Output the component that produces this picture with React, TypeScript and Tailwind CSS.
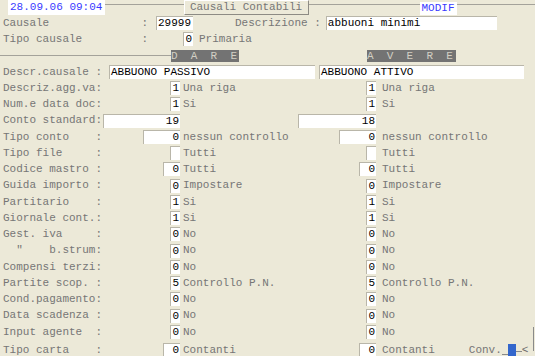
import React from 'react'

type Side = { w: string; v: string; d: string }
type Row = { label: string; l: Side; r: Side }

const narrow = 'w-[10px]'
const small = 'w-[17px]'

const rows: Row[] = [
  { label: 'Descriz.agg.va:', l: { w: narrow, v: '1', d: 'Una riga' }, r: { w: narrow, v: '1', d: 'Una riga' } },
  { label: 'Num.e data doc:', l: { w: narrow, v: '1', d: 'Si' }, r: { w: narrow, v: '1', d: 'Si' } },
  { label: 'Conto standard:', l: { w: 'w-[77px]', v: '19', d: '' }, r: { w: 'w-[78px]', v: '18', d: '' } },
  { label: 'Tipo conto    :', l: { w: 'w-[37px]', v: '0', d: 'nessun controllo' }, r: { w: 'w-[37px]', v: '0', d: 'nessun controllo' } },
  { label: 'Tipo file     :', l: { w: narrow, v: '', d: 'Tutti' }, r: { w: narrow, v: '', d: 'Tutti' } },
  { label: 'Codice mastro :', l: { w: small, v: '0', d: 'Tutti' }, r: { w: small, v: '0', d: 'Tutti' } },
  { label: 'Guida importo :', l: { w: narrow, v: '0', d: 'Impostare' }, r: { w: narrow, v: '0', d: 'Impostare' } },
  { label: 'Partitario    :', l: { w: narrow, v: '1', d: 'Si' }, r: { w: narrow, v: '1', d: 'Si' } },
  { label: 'Giornale cont.:', l: { w: narrow, v: '1', d: 'Si' }, r: { w: narrow, v: '1', d: 'Si' } },
  { label: 'Gest. iva     :', l: { w: narrow, v: '0', d: 'No' }, r: { w: narrow, v: '0', d: 'No' } },
  { label: '  "    b.strum:', l: { w: narrow, v: '0', d: 'No' }, r: { w: narrow, v: '0', d: 'No' } },
  { label: 'Compensi terzi:', l: { w: narrow, v: '0', d: 'No' }, r: { w: narrow, v: '0', d: 'No' } },
  { label: 'Partite scop. :', l: { w: narrow, v: '5', d: 'Controllo P.N.' }, r: { w: narrow, v: '5', d: 'Controllo P.N.' } },
  { label: 'Cond.pagamento:', l: { w: narrow, v: '0', d: 'No' }, r: { w: narrow, v: '0', d: 'No' } },
  { label: 'Data scadenza :', l: { w: narrow, v: '0', d: 'No' }, r: { w: narrow, v: '0', d: 'No' } },
  { label: 'Input agente  :', l: { w: narrow, v: '0', d: 'No' }, r: { w: narrow, v: '0', d: 'No' } },
]

function Box({ w, v, left }: { w: string; v: string; left?: boolean }) {
  return (
    <div
      className={`${w} h-[14px] shrink-0 bg-white border-l border-t border-[#b9b6a9] leading-[13px] text-black whitespace-pre ${
        left ? 'text-left pl-[1px]' : 'text-right pr-[1px]'
      }`}
    >
      {v}
    </div>
  )
}

function FieldRow({ row }: { row: Row }) {
  return (
    <div className="flex h-[16.25px] items-center">
      <div className="flex w-[180px] items-center justify-between pl-[3px]">
        <span className="whitespace-pre">{row.label}</span>
        <Box w={row.l.w} v={row.l.v} />
      </div>
      <div className="flex w-[196px] items-center justify-between">
        <span className="ml-[3px] whitespace-pre">{row.l.d}</span>
        <Box w={row.r.w} v={row.r.v} />
      </div>
      <span className="pl-[6px] whitespace-pre">{row.r.d}</span>
    </div>
  )
}

export default function App() {
  return (
    <div className="h-[356px] w-[535px] overflow-hidden bg-[#ece9d8] font-['Liberation_Mono',monospace] text-[11px] text-[#767676]">
      {/* header */}
      <div className="flex h-[15px] items-start">
        <div className="ml-[8px] h-[15px] w-[97px] bg-white pl-[2px] leading-[15px] text-[#3a3aff]">
          28.09.06 09:04
        </div>
        <div className="mt-[4px] flex-1 border-t border-[#a4a29a]" />
        <div className="h-[15px] w-[125px] border border-t-white border-l-white border-r-[#8d8b84] border-b-[#8d8b84] bg-[#ece9d8] text-center leading-[13px]">
          Causali Contabili
        </div>
        <div className="mt-[4px] w-[111px] border-t border-[#a4a29a]" />
        <div className="mt-[2px] h-[13px] w-[37px] bg-white pl-[2px] leading-[13px] text-[#3a3aff]">MODIF</div>
        <div className="mt-[4px] flex-1 border-t border-[#a4a29a]" />
      </div>

      {/* causale */}
      <div className="flex h-[16.25px] items-center pl-[3px]">
        <span className="w-[153px] whitespace-pre">{'Causale              :'}</span>
        <Box w="w-[37px]" v="29999" left />
        <span className="ml-[42px] whitespace-pre">Descrizione :</span>
        <div className="ml-[5px]">
          <Box w="w-[171px]" v="abbuoni minimi" left />
        </div>
      </div>
      <div className="flex h-[16.25px] items-center pl-[3px]">
        <span className="w-[180px] whitespace-pre">{'Tipo causale         :'}</span>
        <Box w={narrow} v="0" />
        <span className="ml-[6px]">Primaria</span>
      </div>

      {/* dare / avere */}
      <div className="flex h-[16.25px] items-center">
        <div className="w-[171px] border-t border-[#a4a29a]" />
        <div className="h-[12px] w-[68px] bg-[#737373] leading-[12px] whitespace-pre text-[#d2cfc4]">
          {'D  A  R  E'}
        </div>
        <div className="w-[128px]" />
        <div className="h-[12px] w-[89px] bg-[#737373] leading-[12px] whitespace-pre text-[#d2cfc4]">
          {'A  V  E  R  E'}
        </div>
      </div>

      {/* descr causale */}
      <div className="flex h-[16.25px] items-center pl-[3px]">
        <span className="w-[106px] whitespace-pre">Descr.causale :</span>
        <Box w="w-[206px]" v="ABBUONO PASSIVO" left />
        <div className="ml-[4px]">
          <Box w="w-[205px]" v="ABBUONO ATTIVO" left />
        </div>
      </div>

      {rows.map((row) => (
        <FieldRow key={row.label} row={row} />
      ))}

      {/* tipo carta */}
      <div className="mt-[2px] flex h-[16.25px] items-center">
        <div className="flex w-[180px] items-center justify-between pl-[3px]">
          <span className="whitespace-pre">{'Tipo carta    :'}</span>
          <Box w={small} v="0" />
        </div>
        <div className="flex w-[196px] items-center justify-between">
          <span className="ml-[3px]">Contanti</span>
          <Box w={small} v="0" />
        </div>
        <div className="relative flex flex-1 items-center self-stretch">
          <span className="pl-[6px]">Contanti</span>
          <span className="ml-[34px]">Conv.</span>
          <div className="mt-[8px] w-[6px] border-t border-[#8a8a8a]" />
          <div className="h-[12px] w-[8px] bg-[#3366cc]" />
          <div className="mt-[2px] w-[6px] border-t border-[#8a8a8a]" />
          <span className="text-[#6a6a6a]">&lt;</span>
          <div className="absolute bottom-[7px] right-[1px] h-[24px] w-px bg-[#8a8a8a]" />
        </div>
      </div>
    </div>
  )
}
